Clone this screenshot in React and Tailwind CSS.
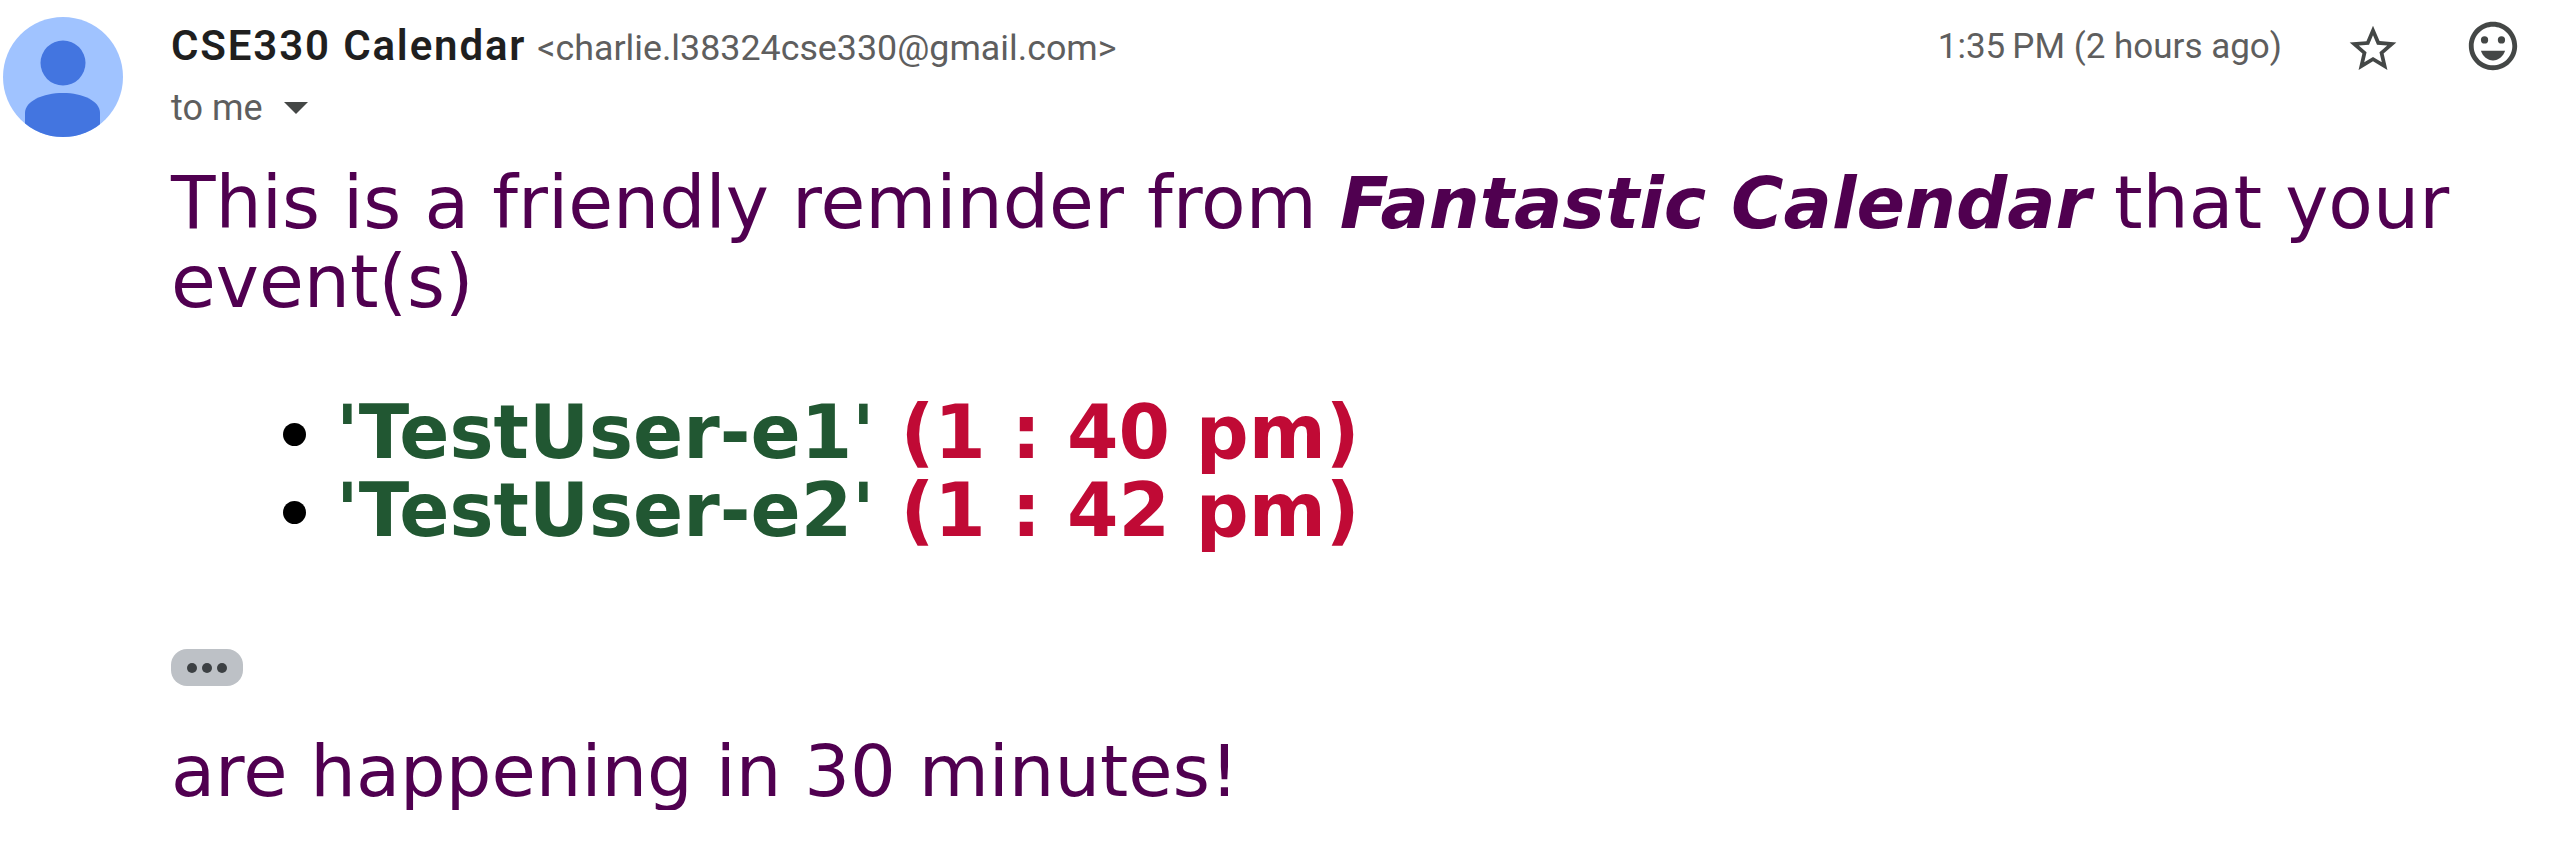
const Avatar = () => (
  <svg width="120" height="120" viewBox="0 0 120 120" className="block">
    <defs>
      <clipPath id="c"><circle cx="60" cy="60" r="60" /></clipPath>
    </defs>
    <circle cx="60" cy="60" r="60" fill="#a0c3ff" />
    <circle cx="60" cy="46" r="22.5" fill="#4375e0" />
    <path clipPath="url(#c)" d="M22 120V96C22 84 40 76 60 76S97 84 97 96V120Z" fill="#4375e0" />
  </svg>
);

export default function App() {
  return (
    <div className="w-[2557px] h-[846px] overflow-hidden bg-white flex font-['Roboto',sans-serif]">
      <div className="w-[171px] shrink-0 pt-[17px] pl-[3px]">
        <Avatar />
      </div>
      <div className="flex-1 min-w-0 pr-[35px] pt-[20px]">
        <div className="flex items-start justify-between h-[62px]">
          <div className="text-[39px] leading-[52px] whitespace-nowrap">
            <span className="font-semibold text-[#1f1f1f] text-[42px] tracking-[1.85px]">CSE330 Calendar</span>
            <span className="text-[35.8px] text-[#5e5e5e] ml-[11px]">&lt;charlie.l38324cse330@gmail.com&gt;</span>
          </div>
          <div className="flex items-center h-[52px] text-[#5e5e5e] text-[35px]">
            <span className="whitespace-nowrap pt-[3px]">1:35&#8201;PM (2 hours ago)</span>
            <svg width="56" height="56" viewBox="0 0 24 24" className="ml-[63px] mt-[5px]" fill="#444746">
              <path d="M22 9.24l-7.19-.62L12 2 9.19 8.63 2 9.24l5.46 4.73L5.82 21 12 17.27 18.18 21l-1.63-7.03L22 9.24zM12 15.4l-3.76 2.27 1-4.28-3.32-2.88 4.38-.38L12 6.1l1.71 4.04 4.38.38-3.32 2.88 1 4.28L12 15.4z" />
            </svg>
            <svg width="58" height="58" viewBox="0 0 24 24" className="ml-[63px]" fill="#444746">
              <circle cx="15.5" cy="9.5" r="1.5" />
              <circle cx="8.5" cy="9.5" r="1.5" />
              <path d="M12 18c2.28 0 4.22-1.66 5-4H7c.78 2.34 2.72 4 5 4z" />
              <path d="M11.99 2C6.47 2 2 6.48 2 12s4.47 10 9.99 10C17.52 22 22 17.52 22 12S17.52 2 11.99 2zM12 20c-4.42 0-8-3.58-8-8s3.58-8 8-8 8 3.58 8 8-3.58 8-8 8z" />
            </svg>
          </div>
        </div>
        <div className="flex items-center h-[44px] text-[36px] text-[#5e5e5e] mt-[4px]">
          <span>to me</span>
          <svg width="24" height="12" viewBox="0 0 24 12" className="ml-[21px]" fill="#444746">
            <path d="M0 0H24L12 12Z" />
          </svg>
        </div>
        <div className="mt-[34px] font-['DejaVu_Sans',sans-serif] text-[72.9px] leading-[78px] text-[#500050]">
          <p>
            This is a friendly reminder from <b className="text-[71.6px]"><i>Fantastic Calendar</i></b> that your event(s)
          </p>
          <ul className="list-disc mt-[72px] pl-[165px] font-bold text-black text-[74px]">
            <li><span className="text-[#215732]">'TestUser-e1'</span> <span className="text-[#c00a35]">(1 : 40 pm)</span></li>
            <li><span className="text-[#215732]">'TestUser-e2'</span> <span className="text-[#c00a35]">(1 : 42 pm)</span></li>
          </ul>
          <div className="mt-[100px] w-[72px] h-[37px] rounded-[16px] bg-[#bdc1c6] flex items-center justify-center gap-[5px]">
            <span className="w-[10px] h-[10px] rounded-full bg-[#3c4043]" />
            <span className="w-[10px] h-[10px] rounded-full bg-[#3c4043]" />
            <span className="w-[10px] h-[10px] rounded-full bg-[#3c4043]" />
          </div>
          <p className="mt-[46px] h-[78px] overflow-hidden text-[72px]">are happening in 30 minutes!</p>
        </div>
      </div>
    </div>
  );
}
